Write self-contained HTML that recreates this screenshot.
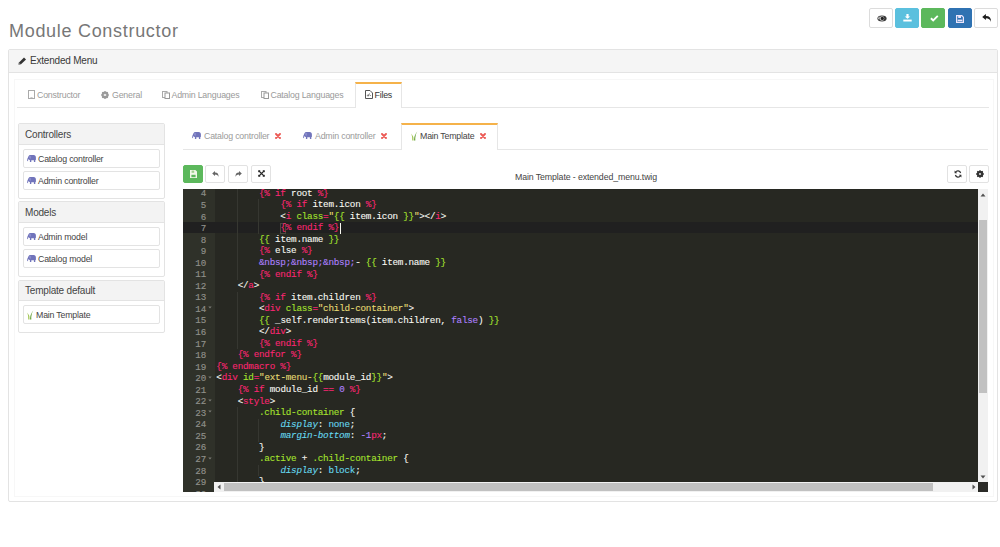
<!DOCTYPE html>
<html><head><meta charset="utf-8">
<style>
*{box-sizing:border-box;margin:0;padding:0}
html,body{width:1000px;height:547px;overflow:hidden;background:#fff;font-family:"Liberation Sans",sans-serif;color:#555}
.abs{position:absolute}
#title{left:9px;top:18px;font-size:18px;letter-spacing:0.7px;color:#777;white-space:nowrap;line-height:26px}
.btn{position:absolute;top:8px;width:24px;height:20px;border-radius:2px;border:1px solid #dcdcdc;background:#fff}
#panel{left:8px;top:49px;width:990px;height:453px;border:1px solid #e3e3e3;border-radius:2px}
#phead{left:0;top:0;width:988px;height:23px;background:#f5f5f5;border-bottom:1px solid #e3e3e3}
#ptitle{left:21px;top:5px;font-size:10px;letter-spacing:-0.2px;color:#3a3a3a;white-space:nowrap;line-height:12px}
.tabline{position:absolute;height:1px;background:#e6e6e6}
.tab{position:absolute;font-size:8.8px;letter-spacing:-0.2px;color:#9a9a9a;white-space:nowrap;line-height:10px}
.lp{position:absolute;border:1px solid #e3e3e3;border-radius:2px;background:#fff}
.lph{position:absolute;left:0;top:0;right:0;background:#f3f3f3;border-bottom:1px solid #e3e3e3;font-size:10px;letter-spacing:-0.2px;color:#444;padding-left:6px}
.li{position:absolute;left:4px;width:137px;height:19px;border:1px solid #e3e3e3;border-radius:2px;font-size:8.8px;letter-spacing:-0.2px;color:#444;white-space:nowrap}
.li span{position:absolute;left:14px;top:4px;line-height:10px}
.tb{position:absolute;top:165px;width:20px;height:18px;border:1px solid #e2e2e2;border-radius:2px;background:#fff}
#editor{left:183px;top:189px;width:805px;height:303px;background:#272822;overflow:hidden}
#gutter{left:0;top:0;width:32px;height:303px;background:#2f3129}
.code{position:absolute;font-family:"Liberation Mono",monospace;font-size:9.3px;letter-spacing:-0.24px;-webkit-text-stroke:0.1px;line-height:11.55px;white-space:pre;color:#f8f8f2}
.gn{position:absolute;font-family:"Liberation Mono",monospace;font-size:9.2px;-webkit-text-stroke:0.15px;line-height:11.55px;white-space:pre;color:#8f908a;text-align:right}
.k{color:#f92672}.g{color:#a6e22e}.y{color:#e6db74}.p{color:#ae81ff}.c{color:#66d9ef}.i{font-style:italic}
.ig{position:absolute;width:1px;background:#363731}
</style></head><body>
<div id="title" class="abs">Module Constructor</div>
<div class="btn" style="left:869px"><svg width="10" height="7" viewBox="0 0 10 7" style="position:absolute;left:6.5px;top:6px"><ellipse cx="5" cy="3.5" rx="4.6" ry="2.9" fill="#3a3a3a"/><circle cx="5" cy="3.5" r="2.2" fill="#d8d8d8"/><circle cx="5.3" cy="3.4" r="1.6" fill="#222"/><path d="M0.6 3.5Q2 1.2 3.2 1.4 2.4 2.6 2.6 4.8 1.4 4.4 0.6 3.5z" fill="#bbb"/></svg></div><div class="btn" style="left:895px;background:#5bc0de;border-color:#5bc0de"><svg width="9" height="8" viewBox="0 0 9 8" style="position:absolute;left:7px;top:5px"><path d="M3.4 0h2.2v2.4h1.7L4.5 4.8 1.7 2.4h1.7z" fill="#fff"/><rect x="0.3" y="5.6" width="8.4" height="1.9" fill="#fff"/></svg></div>
<div class="btn" style="left:921px;background:#5cb85c;border-color:#5cb85c"><svg width="9" height="7" viewBox="0 0 9 7" style="position:absolute;left:7.5px;top:6px"><path d="M0.9 3.2L3.2 5.4 7.8 0.9" stroke="#fff" stroke-width="1.9" fill="none"/></svg></div>
<div class="btn" style="left:948px;background:#2f72b2;border-color:#2f72b2"><svg width="8" height="8" viewBox="0 0 8 8" style="position:absolute;left:7px;top:5.5px"><path d="M0.6 0.6h5.2l1.6 1.6v5.2h-6.8z" fill="none" stroke="#ece4fa" stroke-width="1.2"/><rect x="2.2" y="0.6" width="2.8" height="2.4" fill="#ece4fa"/><rect x="1.6" y="4.6" width="4.8" height="1.6" fill="#ece4fa"/></svg></div>
<div class="btn" style="left:974px"><svg width="10" height="8" viewBox="0 0 10 8" style="position:absolute;left:7px;top:5px"><path d="M0.2 3L3.9 0.1V2Q9.4 2 8.9 7.9 Q7.9 4.3 3.9 4.3V6z" fill="#1e1e1e"/></svg></div>
<div id="panel" class="abs">
  <div id="phead" class="abs"><div id="ptitle" class="abs">Extended Menu</div></div>
</div>
<div class="abs" style="left:14px;top:79px;width:980px;height:418px;border:1px solid #f7f7f7"></div>
<svg width="9" height="8" viewBox="0 0 9 8" style="position:absolute;left:18px;top:57px"><path d="M0.5 7.5 L1 5.4 L6 0.5 L8 2.4 L3 7.2Z" fill="#333"/><path d="M0.5 7.5L1 5.4 2.7 7.1z" fill="#777"/></svg><div class="tabline" style="left:17px;top:107px;width:972px"></div>
<div class="tab" style="left:37px;top:90px">Constructor</div>
<svg width="7" height="9" viewBox="0 0 7 9" style="position:absolute;left:28px;top:90px"><rect x="0.5" y="0.5" width="6" height="8" fill="none" stroke="#aaa" stroke-width="1"/><path d="M2 8.5 L3.5 7 5 8.5" stroke="#aaa" fill="none" stroke-width="0.8"/></svg><div class="tab" style="left:112px;top:90px">General</div>
<svg width="8" height="8" viewBox="0 0 8 8" style="position:absolute;left:101px;top:91px"><circle cx="4" cy="4" r="2.6" fill="none" stroke="#999" stroke-width="1.8"/><path d="M4 0v8M0 4h8M1.2 1.2l5.6 5.6M6.8 1.2l-5.6 5.6" stroke="#999" stroke-width="1.2"/><circle cx="4" cy="4" r="1" fill="#fff"/></svg><div class="tab" style="left:171.5px;top:90px">Admin Languages</div>
<svg width="8" height="8" viewBox="0 0 8 8" style="position:absolute;left:162px;top:91px"><rect x="0.5" y="0.5" width="4.5" height="6" fill="none" stroke="#aaa" stroke-width="1"/><rect x="3" y="2" width="4.5" height="5.5" fill="#fff" stroke="#999" stroke-width="1"/></svg><div class="tab" style="left:270.5px;top:90px">Catalog Languages</div>
<svg width="8" height="8" viewBox="0 0 8 8" style="position:absolute;left:261px;top:91px"><rect x="0.5" y="0.5" width="4.5" height="6" fill="none" stroke="#aaa" stroke-width="1"/><rect x="3" y="2" width="4.5" height="5.5" fill="#fff" stroke="#999" stroke-width="1"/></svg><div class="abs" style="left:355px;top:82px;width:47px;height:26px;background:#fff;border:1px solid #e6e6e6;border-top:2px solid #f5b24a;border-bottom:none"></div>
<svg width="8" height="9" viewBox="0 0 8 9" style="position:absolute;left:365px;top:90px"><path d="M0.5 0.5h4.5l2.5 2.5v5.5h-7z" fill="none" stroke="#555" stroke-width="1"/><path d="M2 6l1-1.5M3 6.5l1.5-3M5 6l.5-1" stroke="#555" stroke-width="0.8"/></svg><div class="tab" style="left:374.5px;top:90px;color:#333">Files</div>
<div class="lp" style="left:18px;top:123px;width:147px;height:76px"><div class="lph" style="height:21px;line-height:21.5px">Controllers</div><div class="li" style="top:25px"><svg width="9" height="7" viewBox="0 0 9 7" style="position:absolute;left:2.5px;top:4.5px"><path d="M1.4 1.4 Q1.8 0 3.6 0 H6.6 Q8.9 0 8.9 2.6 V4.6 Q8.9 5.2 8.3 5.2 V6.9 H6.9 V5.2 H4.3 V6.9 H2.9 V5 Q1.7 4.9 1.3 4.1 Q0.9 5 1.1 6.2 L0.2 5.9 Q0.1 3.4 1.4 1.4Z" fill="#7174bb"/><path d="M1.6 1.6 Q2.2 0.8 3.8 0.9 Q4.6 2.2 3.6 4 Q2.2 4 1.6 1.6Z" fill="#8a8dcc"/></svg><span>Catalog controller</span></div><div class="li" style="top:47px"><svg width="9" height="7" viewBox="0 0 9 7" style="position:absolute;left:2.5px;top:4.5px"><path d="M1.4 1.4 Q1.8 0 3.6 0 H6.6 Q8.9 0 8.9 2.6 V4.6 Q8.9 5.2 8.3 5.2 V6.9 H6.9 V5.2 H4.3 V6.9 H2.9 V5 Q1.7 4.9 1.3 4.1 Q0.9 5 1.1 6.2 L0.2 5.9 Q0.1 3.4 1.4 1.4Z" fill="#7174bb"/><path d="M1.6 1.6 Q2.2 0.8 3.8 0.9 Q4.6 2.2 3.6 4 Q2.2 4 1.6 1.6Z" fill="#8a8dcc"/></svg><span>Admin controller</span></div></div>
<div class="lp" style="left:18px;top:201px;width:147px;height:76px"><div class="lph" style="height:21px;line-height:21.5px">Models</div><div class="li" style="top:25px"><svg width="9" height="7" viewBox="0 0 9 7" style="position:absolute;left:2.5px;top:4.5px"><path d="M1.4 1.4 Q1.8 0 3.6 0 H6.6 Q8.9 0 8.9 2.6 V4.6 Q8.9 5.2 8.3 5.2 V6.9 H6.9 V5.2 H4.3 V6.9 H2.9 V5 Q1.7 4.9 1.3 4.1 Q0.9 5 1.1 6.2 L0.2 5.9 Q0.1 3.4 1.4 1.4Z" fill="#7174bb"/><path d="M1.6 1.6 Q2.2 0.8 3.8 0.9 Q4.6 2.2 3.6 4 Q2.2 4 1.6 1.6Z" fill="#8a8dcc"/></svg><span>Admin model</span></div><div class="li" style="top:47px"><svg width="9" height="7" viewBox="0 0 9 7" style="position:absolute;left:2.5px;top:4.5px"><path d="M1.4 1.4 Q1.8 0 3.6 0 H6.6 Q8.9 0 8.9 2.6 V4.6 Q8.9 5.2 8.3 5.2 V6.9 H6.9 V5.2 H4.3 V6.9 H2.9 V5 Q1.7 4.9 1.3 4.1 Q0.9 5 1.1 6.2 L0.2 5.9 Q0.1 3.4 1.4 1.4Z" fill="#7174bb"/><path d="M1.6 1.6 Q2.2 0.8 3.8 0.9 Q4.6 2.2 3.6 4 Q2.2 4 1.6 1.6Z" fill="#8a8dcc"/></svg><span>Catalog model</span></div></div>
<div class="lp" style="left:18px;top:280px;width:147px;height:53px"><div class="lph" style="height:20px;line-height:20.5px">Template default</div><div class="li" style="top:24px"><svg width="7" height="10" viewBox="0 0 7 10" style="position:absolute;left:2.5px;top:4px"><path d="M0.3 2.6 Q2.7 5.2 2.5 9.5 L1.3 9.5 Q1.3 5.4 0.3 2.6Z" fill="#9cc24a"/><path d="M6.4 0.2 Q3.9 3.8 4.3 9.5 L3.1 9.5 Q3 4.2 6.4 0.2Z" fill="#5c9c2c"/></svg><span style="left:12px">Main Template</span></div></div>
<div class="tabline" style="left:183px;top:149px;width:805px"></div>
<svg width="9" height="7" viewBox="0 0 9 7" style="position:absolute;left:192px;top:131.5px"><path d="M1.4 1.4 Q1.8 0 3.6 0 H6.6 Q8.9 0 8.9 2.6 V4.6 Q8.9 5.2 8.3 5.2 V6.9 H6.9 V5.2 H4.3 V6.9 H2.9 V5 Q1.7 4.9 1.3 4.1 Q0.9 5 1.1 6.2 L0.2 5.9 Q0.1 3.4 1.4 1.4Z" fill="#7174bb"/><path d="M1.6 1.6 Q2.2 0.8 3.8 0.9 Q4.6 2.2 3.6 4 Q2.2 4 1.6 1.6Z" fill="#8a8dcc"/></svg><div class="tab" style="left:204px;top:131px">Catalog controller</div><svg width="6" height="6" viewBox="0 0 6 6" style="position:absolute;left:275px;top:133.0px"><path d="M1 1L5 5M5 1L1 5" stroke="#ec5a55" stroke-width="1.9" stroke-linecap="round"/></svg>
<svg width="9" height="7" viewBox="0 0 9 7" style="position:absolute;left:303px;top:131.5px"><path d="M1.4 1.4 Q1.8 0 3.6 0 H6.6 Q8.9 0 8.9 2.6 V4.6 Q8.9 5.2 8.3 5.2 V6.9 H6.9 V5.2 H4.3 V6.9 H2.9 V5 Q1.7 4.9 1.3 4.1 Q0.9 5 1.1 6.2 L0.2 5.9 Q0.1 3.4 1.4 1.4Z" fill="#7174bb"/><path d="M1.6 1.6 Q2.2 0.8 3.8 0.9 Q4.6 2.2 3.6 4 Q2.2 4 1.6 1.6Z" fill="#8a8dcc"/></svg><div class="tab" style="left:315px;top:131px">Admin controller</div><svg width="6" height="6" viewBox="0 0 6 6" style="position:absolute;left:381px;top:133.0px"><path d="M1 1L5 5M5 1L1 5" stroke="#ec5a55" stroke-width="1.9" stroke-linecap="round"/></svg>
<div class="abs" style="left:401px;top:123px;width:97px;height:27px;background:#fff;border:1px solid #e6e6e6;border-top:2px solid #f5b24a;border-bottom:none"></div>
<svg width="7" height="10" viewBox="0 0 7 10" style="position:absolute;left:410.5px;top:131px"><path d="M0.3 2.6 Q2.7 5.2 2.5 9.5 L1.3 9.5 Q1.3 5.4 0.3 2.6Z" fill="#9cc24a"/><path d="M6.4 0.2 Q3.9 3.8 4.3 9.5 L3.1 9.5 Q3 4.2 6.4 0.2Z" fill="#5c9c2c"/></svg><div class="tab" style="left:420px;top:131px;color:#444">Main Template</div><svg width="6" height="6" viewBox="0 0 6 6" style="position:absolute;left:480px;top:133.0px"><path d="M1 1L5 5M5 1L1 5" stroke="#ec5a55" stroke-width="1.9" stroke-linecap="round"/></svg>
<div class="tb" style="left:183px;background:#5cb85c;border-color:#5cb85c"><svg width="7" height="8" viewBox="0 0 7 8" style="position:absolute;left:5.5px;top:3.5px"><path d="M0 0h5.4l1.6 1.6v6.4h-7z" fill="#f0f8e8"/><rect x="1.6" y="0.6" width="2.6" height="2.2" fill="#9fd08f"/><rect x="1.4" y="4.8" width="4.2" height="2.4" fill="#5cb85c"/></svg></div>
<div class="tb" style="left:205px"><svg width="7" height="6" viewBox="0 0 7 6" style="position:absolute;left:6px;top:4.5px"><path d="M0.2 2.4L3 0v1.5Q6.8 1.5 6.5 5.8 Q5.8 3.4 3 3.4v1.5z" fill="#666"/></svg></div>
<div class="tb" style="left:228px"><svg width="7" height="6" viewBox="0 0 7 6" style="position:absolute;left:6px;top:4.5px"><path d="M6.8 2.4L4 0v1.5Q0.2 1.5 0.5 5.8 Q1.2 3.4 4 3.4v1.5z" fill="#666"/></svg></div>
<div class="tb" style="left:251px"><svg width="7" height="7" viewBox="0 0 7 7" style="position:absolute;left:5.5px;top:4px"><path d="M1 1L6 6M6 1L1 6" stroke="#2a2a2a" stroke-width="1.1"/><path d="M0.2 0.2h2.4L0.2 2.6zM6.8 0.2v2.4L4.4 0.2zM0.2 6.8v-2.4l2.4 2.4zM6.8 6.8h-2.4l2.4-2.4z" fill="#2a2a2a"/></svg></div>
<div class="tab" style="left:515px;top:172px;color:#444;font-size:8.8px;letter-spacing:-0.12px">Main Template - extended_menu.twig</div>
<div class="tb" style="left:947px"><svg width="8" height="8" viewBox="0 0 8 8" style="position:absolute;left:5.5px;top:3.5px"><path d="M6.6 3A2.8 2.8 0 0 0 1.5 2.2M1.4 5A2.8 2.8 0 0 0 6.5 5.8" stroke="#333" stroke-width="1.2" fill="none"/><path d="M0.6 0.6v2.6h2.6zM7.4 7.4v-2.6h-2.6z" fill="#333"/></svg></div>
<div class="tb" style="left:969px"><svg width="8" height="8" viewBox="0 0 8 8" style="position:absolute;left:5.5px;top:3.5px"><circle cx="4" cy="4" r="2.4" fill="none" stroke="#333" stroke-width="1.8"/><path d="M4 0.2v7.6M0.2 4h7.6M1.3 1.3l5.4 5.4M6.7 1.3l-5.4 5.4" stroke="#333" stroke-width="1.3"/><circle cx="4" cy="4" r="0.9" fill="#fff"/></svg></div>
<div id="editor" class="abs">
  <div id="gutter" class="abs"></div>
  <div class="abs" style="left:0;top:32.5px;width:805px;height:11.55px;background:#202020"></div>
  <div class="ig" style="left:53.86px;top:-1.30px;height:92.40px"></div><div class="ig" style="left:53.86px;top:102.65px;height:57.75px"></div><div class="ig" style="left:53.86px;top:218.15px;height:80.85px"></div><div class="ig" style="left:75.22px;top:10.25px;height:34.65px"></div><div class="ig" style="left:75.22px;top:229.70px;height:23.10px"></div><div class="ig" style="left:75.22px;top:275.90px;height:11.55px"></div><svg width="4" height="3" viewBox="0 0 4 3" style="position:absolute;left:25px;top:117.40px"><path d="M0.3 0.5h3.4L2 2.5z" fill="#7a7b75"/></svg><svg width="4" height="3" viewBox="0 0 4 3" style="position:absolute;left:25px;top:186.70px"><path d="M0.3 0.5h3.4L2 2.5z" fill="#7a7b75"/></svg><svg width="4" height="3" viewBox="0 0 4 3" style="position:absolute;left:25px;top:209.80px"><path d="M0.3 0.5h3.4L2 2.5z" fill="#7a7b75"/></svg><svg width="4" height="3" viewBox="0 0 4 3" style="position:absolute;left:25px;top:221.35px"><path d="M0.3 0.5h3.4L2 2.5z" fill="#7a7b75"/></svg><svg width="4" height="3" viewBox="0 0 4 3" style="position:absolute;left:25px;top:267.55px"><path d="M0.3 0.5h3.4L2 2.5z" fill="#7a7b75"/></svg><div class="abs" style="left:96.88px;top:33.85px;width:6.34px;height:11.55px;border:1px solid #49483e"></div><div class="abs" style="left:156.62px;top:33.85px;width:1px;height:11.05px;background:#f8f8f0"></div>
  <div class="gn" style="left:0;top:-0.6px;width:23.2px">4
5
6
7
8
9
10
11
12
13
14
15
16
17
18
19
20
21
22
23
24
25
26
27
28
29
30</div>
  <div class="code" style="left:33.3px;top:-1.3px">        <span class="k">{% if</span> root <span class="k">%}</span>
            <span class="k">{% if</span> item.icon <span class="k">%}</span>
            &lt;<span class="k">i</span> <span class="g">class</span><span class="k">=</span><span class="y">"</span><span class="g">{{</span> item.icon <span class="g">}}</span><span class="y">"</span>&gt;&lt;/<span class="k">i</span>&gt;
            <span class="k">{% endif %}</span>
        <span class="g">{{</span> item.name <span class="g">}}</span>
        <span class="k">{%</span> else <span class="k">%}</span>
        <span class="p">&amp;nbsp;&amp;nbsp;&amp;nbsp;</span>- <span class="g">{{</span> item.name <span class="g">}}</span>
        <span class="k">{% endif %}</span>
    &lt;/<span class="k">a</span>&gt;
        <span class="k">{% if</span> item.children <span class="k">%}</span>
        &lt;<span class="k">div</span> <span class="g">class</span><span class="k">=</span><span class="y">"child-container"</span>&gt;
        <span class="g">{{</span> _self.renderItems(item.children, <span class="p">false</span>) <span class="g">}}</span>
        &lt;/<span class="k">div</span>&gt;
        <span class="k">{% endif %}</span>
    <span class="k">{% endfor %}</span>
<span class="k">{% endmacro %}</span>
&lt;<span class="k">div</span> <span class="g">id</span><span class="k">=</span><span class="y">"ext-menu-</span><span class="g">{{</span>module_id<span class="g">}}</span><span class="y">"</span>&gt;
    <span class="k">{% if</span> module_id <span class="k">==</span> <span class="p">0</span> <span class="k">%}</span>
    &lt;<span class="k">style</span>&gt;
        <span class="g">.child-container</span> {
            <span class="c i">display</span>: <span class="c">none</span>;
            <span class="c i">margin-bottom</span>: <span class="p">-1</span><span class="k">px</span>;
        }
        <span class="g">.active</span> + <span class="g">.child-container</span> {
            <span class="c i">display</span>: <span class="c">block</span>;
        }
    <span class="k">{% endif %}</span></div>
</div>
<div class="abs" style="left:978px;top:189px;width:10px;height:293px;background:#f1f1f1"></div>
<div class="abs" style="left:979px;top:220px;width:8px;height:173px;background:#c1c1c1"></div>
<svg width="6" height="4" viewBox="0 0 6 4" style="position:absolute;left:980px;top:192.5px"><path d="M0.5 3.5L3 0.5 5.5 3.5z" fill="#505050"/></svg><svg width="6" height="4" viewBox="0 0 6 4" style="position:absolute;left:980px;top:474.5px"><path d="M0.5 0.5L3 3.5 5.5 0.5z" fill="#505050"/></svg><div class="abs" style="left:214px;top:482px;width:764px;height:10px;background:#f1f1f1"></div>
<div class="abs" style="left:224px;top:483px;width:709px;height:8px;background:#c1c1c1"></div>
<svg width="4" height="6" viewBox="0 0 4 6" style="position:absolute;left:217px;top:484px"><path d="M3.5 0.5L0.5 3 3.5 5.5z" fill="#505050"/></svg><svg width="4" height="6" viewBox="0 0 4 6" style="position:absolute;left:972px;top:484px"><path d="M0.5 0.5L3.5 3 0.5 5.5z" fill="#505050"/></svg><div class="abs" style="left:979px;top:482px;width:9px;height:10px;background:#2b2b28"></div>
</body></html>
